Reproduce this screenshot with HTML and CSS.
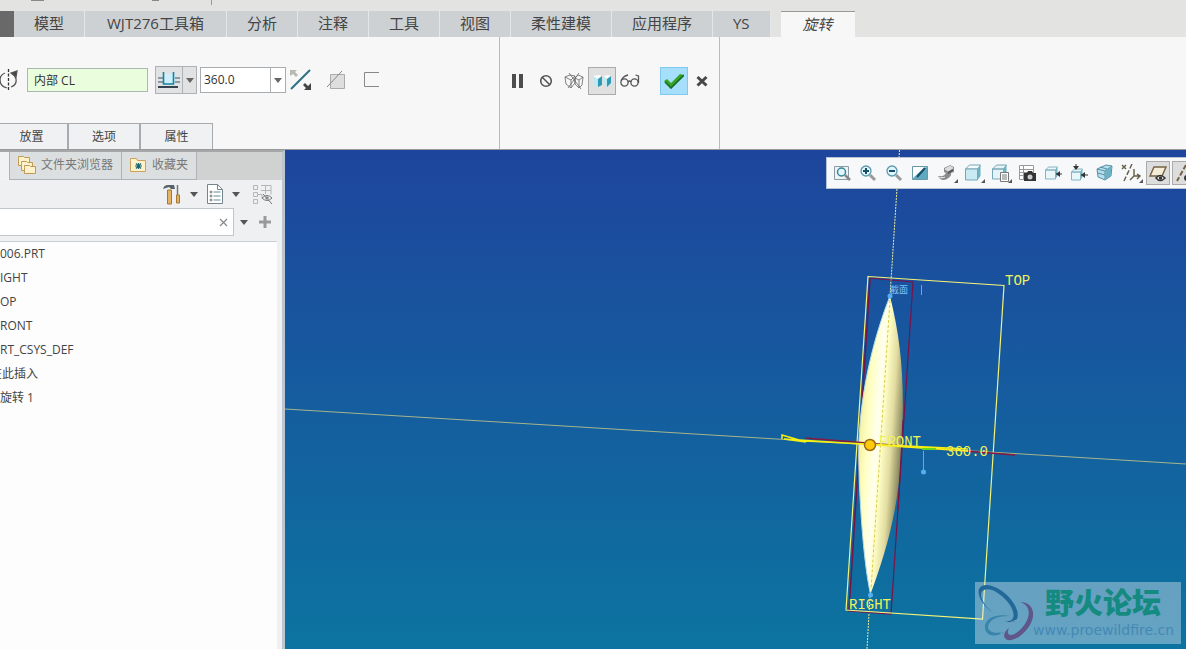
FILE: index.html
```html
<!DOCTYPE html>
<html lang="zh-CN">
<head>
<meta charset="utf-8">
<title>旋转</title>
<link rel="stylesheet" href="styles.css">
</head>
<body>
<div class="app">
  <div class="titlebar">
    <svg width="220" height="11"><path d="M31 0h13M152 0h7" stroke="#888" stroke-width="2"/><path d="M211.500 0v5" stroke="#999"/></svg>
  </div>
  <nav class="tabs">
    <span class="file-tab"></span>
    <button class="tab">模型</button>
    <button class="tab wide">WJT276工具箱</button>
    <button class="tab">分析</button>
    <button class="tab">注释</button>
    <button class="tab">工具</button>
    <button class="tab">视图</button>
    <button class="tab">柔性建模</button>
    <button class="tab">应用程序</button>
    <button class="tab">YS</button>
    <button class="tab current">旋转</button>
  </nav>
  <header class="ribbon">
    <section class="options">
      <div class="controls">
        <svg class="revolve" width="19" height="22" fill="none" stroke="#555" stroke-width="1.300"><path d="M8.500 0v22" stroke="#333" stroke-dasharray="3 1.500"/><path d="M5 4Q0 6 0 11q0 6 7 8M11 18q6-2 5-8l-2-5"/><path d="M11 4l6-2-1 6z" fill="#444"/></svg>
        <input class="axis" type="text" value="内部 CL" aria-label="旋转轴">
        <div class="split">
          <button class="split-main" aria-label="从草绘平面旋转"><svg width="22" height="18"><path d="M0 7h7M15 7h7M0 11h22" stroke="#8e9aa5" stroke-width="2"/><path d="M5 3h12v9H5z" fill="#cdeefa"/><path d="M5.500 1v12h10V1" fill="none" stroke="#16829f" stroke-width="1.600"/><path d="M0 16h20" stroke="#34434f" stroke-width="2"/></svg></button>
          <button class="drop" aria-label="深度选项"><svg width="8" height="5"><path d="M0 0h8L4 5z" fill="#666"/></svg></button>
        </div>
        <div class="combo">
          <input type="text" value="360.0" aria-label="角度">
          <button class="drop" aria-label="角度列表"><svg width="8" height="5"><path d="M0 0h8L4 5z" fill="#666"/></svg></button>
        </div>
        <button class="icon flip" aria-label="反向"><svg width="22" height="22"><path d="M1 20L20 1" stroke="#2a7180" stroke-width="2"/><path d="M0 1h7L5 3l3 3-2 2-3-3-3 2z" fill="#b9b9b2"/><path d="M21 21h-7l2-2-3-3 2-2 3 3 3-3z" fill="#444"/></svg></button>
        <button class="icon" aria-label="移除材料"><svg width="20" height="20"><path d="M4.500 4.500h14v14h-14z" fill="#dedede" stroke="#aaa"/><path d="M1 17L16 1" stroke="#888"/></svg></button>
        <button class="icon thicken" aria-label="加厚草绘"><svg width="16" height="16"><path d="M15 .5H.5v14H15" fill="none" stroke="#888"/></svg></button>
      </div>
      <div class="panels">
        <button>放置</button><button>选项</button><button>属性</button>
      </div>
    </section>
    <section class="actions">
      <button aria-label="暂停"><svg width="12" height="14"><path d="M0 0h4v14H0zM7 0h4v14H7z" fill="#4d4d4d"/></svg></button>
      <button aria-label="无预览"><svg width="14" height="14" fill="none" stroke="#555" stroke-width="1.600"><circle cx="7" cy="7" r="5.300"/><path d="M3 3l8 8"/></svg></button>
      <button aria-label="分离预览"><svg width="20" height="18" fill="none" stroke="#666" stroke-width=".8"><path d="M1 5l6 3v8l-5-4zM7 8l4-4v7l-4 5M1 5l5-2 5 1M11 6l4 2v8l-4-4zM15 8l4-3-1 8-3 3M11 6l3-3 5 2M4 16L15 1M5 1l12 16"/></svg></button>
      <button class="pressed" aria-label="连接预览"><svg width="20" height="18"><path d="M1 4l7-1 2 2-4 2z" fill="#fff"/><path d="M1 4l5 3v8l-4-3z" fill="#bdebf5"/><path d="M6 7l4-3v9l-4 2z" fill="#2e9ab5"/><path d="M11 4l6-1 2 2-4 2z" fill="#fff"/><path d="M11 4l4 3v8l-4-4z" fill="#bdebf5"/><path d="M15 7l4-3v7l-4 4z" fill="#2e9ab5"/></svg></button>
      <button aria-label="验证"><svg width="20" height="16" fill="none" stroke="#555" stroke-width="1.300"><circle cx="4.500" cy="9.500" r="3.600"/><circle cx="14.500" cy="9.500" r="3.600"/><path d="M8 9q1.500-2 3 0M1 8q2-5 7-6M18.500 10V3l-3-1"/></svg></button>
      <button class="ok" aria-label="确定"><svg width="20" height="16"><path d="M0 8l3-2 4 4L16 1l4 1L7 15z" fill="#35a526"/><path d="M1 9l6 6L20 2" fill="none" stroke="#176b25" stroke-width="1.600"/></svg></button>
      <button aria-label="取消"><svg width="12" height="12"><path d="M1.500 2l9 8.500M10.500 2l-9 8.500" stroke="#484848" stroke-width="3"/></svg></button>
    </section>
  </header>
  <main class="work">
    <aside class="side">
      <div class="side-tabs">
        <span class="side-current"></span>
        <button><svg width="20" height="20" fill="#fff1c9" stroke="#c09a55"><path d="M1.500 3.500v-2h5l1 1h5v8h-11z"/><path d="M4.500 8.500v-2h5l1 1h5v8h-11z"/><path d="M7.500 12.500v-2h5l1 1h5v7h-11z"/></svg>文件夹浏览器</button>
        <button><svg width="18" height="16"><path d="M1.500 3.500v-2h6l1 2h8v11h-15z" fill="#fff1c9" stroke="#c9a35e"/><path d="M6 9h7M9.500 6v6M7 6.500l5 5M12 6.500l-5 5" stroke="#1d6a75" stroke-width="1.200"/></svg>收藏夹</button>
      </div>
      <div class="tools">
        <button aria-label="设置"><svg width="18" height="21"><path d="M0 5Q1 1 5 1h6l1 4H8L6 3z" fill="#586069"/><path d="M4.500 6h4v14h-4z" fill="#e3b368" stroke="#a77734"/><path d="M14.500 1v10" stroke="#777" stroke-width="1.500"/><path d="M13.500 11h3v8h-3z" fill="#e3b368" stroke="#a77734"/></svg></button>
        <button aria-label="设置列表"><svg width="8" height="5"><path d="M0 0h8L4 5z" fill="#555"/></svg></button>
        <button aria-label="显示"><svg width="16" height="20"><path d="M.5.5h10l5 5v14H.5z" fill="#fff" stroke="#74858e"/><path d="M10.500.5v5h5" fill="none" stroke="#74858e"/><path d="M6.500 8h7M6.500 12h7M6.500 16h7" stroke="#638b9a"/><circle cx="4" cy="8" r="1" fill="none" stroke="#555" stroke-width=".8"/><circle cx="4" cy="12" r="1" fill="none" stroke="#555" stroke-width=".8"/><circle cx="4" cy="16" r="1" fill="none" stroke="#555" stroke-width=".8"/></svg></button>
        <button aria-label="显示列表"><svg width="8" height="5"><path d="M0 0h8L4 5z" fill="#555"/></svg></button>
        <button aria-label="树列"><svg width="22" height="21" fill="none" stroke="#b6b6b6"><path d="M1.500 1.500h4v4h-4zM1.500 8.500h4v4h-4zM1.500 15.500h4v4h-4zM9 1.500h10v9M9 6.500h10M13.500 1v9M6 10.500h4v4"/><path d="M10 14q5-5 10 0-5 5-10 0M11 10l9 10" stroke="#777"/><circle cx="15" cy="14" r="1.500" fill="#777"/></svg></button>
      </div>
      <div class="search">
        <div class="search-box"><input type="text" aria-label="搜索"><button aria-label="清除"><svg width="9" height="9"><path d="M1 1l7 7M8 1L1 8" stroke="#888" stroke-width="1.200"/></svg></button></div>
        <button aria-label="搜索选项"><svg width="8" height="5"><path d="M0 0h8L4 5z" fill="#555"/></svg></button>
        <button class="add" aria-label="添加"><svg width="12" height="12"><path d="M6 0v12M0 6h12" stroke="#999" stroke-width="3"/></svg></button>
      </div>
      <ul class="tree">
        <li>006.PRT</li><li>IGHT</li><li>OP</li><li>RONT</li><li>RT_CSYS_DEF</li><li class="clipped">在此插入</li><li>旋转 1</li>
      </ul>
    </aside>
    <section class="view">
      <svg class="scene" width="100%" height="100%">
        <defs><linearGradient id="body" gradientUnits="userSpaceOnUse" x1="859" y1="445" x2="903" y2="448">
          <stop offset="0" stop-color="#f5f2a5"/><stop offset=".18" stop-color="#ffffc4"/><stop offset=".4" stop-color="#fffff0"/><stop offset=".5" stop-color="#ffffc8"/><stop offset=".72" stop-color="#e2dca0"/><stop offset="1" stop-color="#777651"/></linearGradient></defs>
        <g transform="translate(-285 -150)" fill="none">
          <path d="M285 409L1186 464" stroke="#a5b58c"/>
          <path d="M899.500 150L890 296M870 596L867 649" stroke="#e8ee9e" stroke-dasharray="2 1"/>
          <path d="M869 278L913 282L891 614L848 611" stroke="#77134b" stroke-width="1.200"/>
          <path d="M870 279L849 610" stroke="#77134b" stroke-width="1.500"/>
          <path d="M890 296C875 334 856 400 859 470C860 510 864 565 870.500 594C885 555 899 510 901.500 450C905 385 902 345 890 296z" fill="url(#body)"/>
          <path d="M890 296C875 334 856 400 859 470C860 510 864 565 870.500 594" stroke="#b3dbe6"/>
          <path d="M890 300L871 590" stroke="#d9cb45" stroke-dasharray="3 2"/>
          <path d="M903 420L898 510" stroke="#77134b"/>
          <path d="M868 276.500L1004 285.500L982.500 619L846 610z" stroke="#f3f27a" stroke-width="1.200"/>
          <path d="M805 438L1015 455" stroke="#8a173e" stroke-width="1.500"/>
          <path d="M782 439v-4l24 7-22-3L968 451M805 441L968 449" stroke="#f5ef12" stroke-width="1.500"/>
          <path d="M922 449h14" stroke="#68d521" stroke-width="2"/>
          <path d="M923.500 451v20M921.500 285v10" stroke="#54aff0"/>
          <g fill="#54aff0"><circle cx="923.500" cy="472" r="2.500"/><circle cx="890" cy="296" r="2.500"/><circle cx="870.500" cy="595" r="2.500"/></g>
          <circle cx="870" cy="445" r="5.500" fill="#ffcb0b" stroke="#9c6a16" stroke-width="1.500"/>
          <g class="tags"><text x="1005" y="285">TOP</text><text x="879" y="446">FRONT</text><text x="946" y="456">360.0</text><text x="849" y="609">RIGHT</text></g>
          <text class="section-tag" x="890" y="293">截面</text>
        </g>
      </svg>
      <div class="view-tools">
        <button aria-label="重新调整"><svg width="18" height="18"><path d="M1.500 2.500h14v13h-14z" fill="#edf4f6" stroke="#8e9ba2"/><circle cx="8.500" cy="8" r="4" fill="#e0f6fb" stroke="#39849a" stroke-width="1.500"/><path d="M12 11l5 5" stroke="#888" stroke-width="2.500"/></svg></button>
        <button aria-label="放大"><svg width="18" height="18"><circle cx="7" cy="7" r="5" fill="#dff5fb" stroke="#5b9aae" stroke-width="1.300"/><path d="M4 7h6M7 4v6" stroke="#174f69" stroke-width="2"/><path d="M11 11l5 5" stroke="#999" stroke-width="3"/></svg></button>
        <button aria-label="缩小"><svg width="18" height="18"><circle cx="7" cy="7" r="5" fill="#dff5fb" stroke="#5b9aae" stroke-width="1.300"/><path d="M4 7h6" stroke="#174f69" stroke-width="2"/><path d="M11 11l5 5" stroke="#999" stroke-width="3"/></svg></button>
        <button aria-label="重画"><svg width="18" height="18"><path d="M1.500 2.500h15v13h-15z" fill="#bde0eb" stroke="#6999a9"/><path d="M2 15Q4 8 16 3v12z" fill="#61a9be"/><path d="M2 3h12L2 14z" fill="#fff"/><path d="M6 13l8-9" stroke="#174f69" stroke-width="2"/></svg></button>
        <button class="menu" aria-label="渲染选项"><svg width="18" height="18"><path d="M1 12q3 6 9 3 5-3 4-6l3-1V3l-4-2-6 3v4l2 1q-2 4-5 3z" fill="#8b8b8b"/><path d="M8 5l5-3 3 2-5 3zM2 13q3 2 6 0" fill="#ddd" stroke="#ddd"/><path d="M11 8l5-3v2l-5 3z" fill="#555"/></svg></button>
        <button class="menu" aria-label="显示样式"><svg width="18" height="18"><path d="M1.500 5l4-4h11l-3 4z" fill="#f4fcfe" stroke="#76a6b6"/><path d="M1.500 5h12v11h-12z" fill="#c9eaf3" stroke="#76a6b6"/><path d="M13.500 5l3-4v11l-3 4z" fill="#6cb1c4"/></svg></button>
        <button class="menu" aria-label="已保存方向"><svg width="18" height="18"><path d="M1.500 5l4-4h10l-3 4zM1.500 5h11v10h-11z" fill="#e3f3f8" stroke="#76a6b6"/><path d="M12.500 5l3-4v8l-3 5z" fill="#6cb1c4"/><path d="M9.500 8.500h8v9h-8z" fill="#fff" stroke="#777"/><path d="M11 11h5M11 13h5M11 15h5" stroke="#777"/></svg></button>
        <button aria-label="视图管理器"><svg width="18" height="18"><path d="M1.500 1.500h14v14h-14zM5.500 1v14M1 5.500h14M1 8.500h14M1 11.500h14" fill="#fff" stroke="#999"/><path d="M6 9h3l1-2h4l1 2h3v8H6z" fill="#333"/><circle cx="12" cy="13" r="2.500" fill="#ccc"/></svg></button>
        <button aria-label="视图法向"><svg width="18" height="18"><path d="M1.500 6l3-3h9l-2 3zM1.500 6h10v9h-10z" fill="#e9f7fa" stroke="#85b4c3"/><path d="M11.500 6l2-3v9l-2 3z" fill="#73b5c8"/><path d="M12 10h6" stroke="#333"/><path d="M12 10l4-3v6z" fill="#333"/></svg></button>
        <button aria-label="视图方向"><svg width="18" height="18"><path d="M1.500 8l3-3h8l-2 3zM1.500 8h9v8h-9z" fill="#e9f7fa" stroke="#85b4c3"/><path d="M10.500 8l2-3v8l-2 3z" fill="#73b5c8"/><path d="M11 11h7M6 0v5" stroke="#333"/><path d="M11 11l4-3v6zM3 2h6L6 6z" fill="#333"/></svg></button>
        <button aria-label="透视图"><svg width="18" height="18"><path d="M1 5l9-4 6 1-1 10-6 4-7-3z" fill="#b7deea" stroke="#5792a6"/><path d="M1 5l8 2 7-5M9 7v9M4 3l7 2-1 9M2 9l7 2 6-4" fill="none" stroke="#5792a6"/><path d="M9 7l6-4v9l-6 4z" fill="#6cb1c4"/></svg></button>
        <button class="menu" aria-label="基准显示"><svg width="20" height="18" fill="none" stroke="#665d44" stroke-width="1.400"><path d="M1 1l4 4M5 1L1 5"/><path d="M11 0L3 17" stroke-dasharray="5 2"/><path d="M13 5v7l-4 4M13 12h6M16 10l3 2-3 3"/></svg></button>
        <button class="pressed" aria-label="平面显示"><svg width="18" height="18"><path d="M5 3h12l-4 9H1z" fill="#f4edd7" stroke="#756345" stroke-width="1.400"/><path d="M7 14q4-5 9 0-5 5-9 0z" fill="#eee" stroke="#333" stroke-width="1.500"/><circle cx="11.500" cy="14" r="1.700" fill="#333"/></svg></button>
        <button class="pressed" aria-label="轴显示"><svg width="18" height="18"><path d="M11 1L2 17" stroke="#756345" stroke-width="2" stroke-dasharray="5 2"/><circle cx="12" cy="14" r="3" fill="#333"/></svg></button>
      </div>
      <div class="watermark">
        <svg width="58" height="62" viewBox="0 0 58 62" fill="none"><path d="M18 31C3 20-2 4 11 3C26 3 47 24 42 37C40 41 35 41 30 39C44 41 40 23 24 12C12 3 3 8 7 17C9 22 13 27 18 31z" fill="#22699a"/><path d="M35 34C20 31 9 37 10 46C11 54 20 56 29 50C20 52 13 50 13 45C14 37 23 34 35 34z" fill="#3984aa"/><path d="M45 20C59 20 62 34 53 46C44 58 31 62 29 54C29 51 31 48 34 46C30 54 37 56 46 47C56 36 57 24 45 20z" fill="#5f5689"/><path d="M26 52C27 45 35 39 46 37" stroke="#7c9fc0"/></svg>
        <div><strong>野火论坛</strong><span>www.proewildfire.cn</span></div>
      </div>
    </section>
  </main>
</div>
</body>
</html>
```
FILE: styles.css
```css
* { box-sizing: border-box; }
body {
  margin: 0;
  font: 12px/16px "Open Sans", "Noto Sans CJK SC", sans-serif;
  color: #444;
  background: #f7f7f7;
}
button {
  display: flex;
  align-items: center;
  justify-content: center;
  flex: none;
  padding: 0;
  border: 0;
  background: none;
  color: inherit;
  font: inherit;
}
input { min-width: 0; font: inherit; color: #333; }
svg { display: block; flex: none; }

.app { display: flex; flex-direction: column; height: 100vh; overflow: hidden; }
.titlebar { height: 11px; flex: none; background: #e3e3e2; }

.tabs { display: flex; height: 26px; flex: none; background: #e3e3e2; font-size: 15px; line-height: 20px; }
.file-tab { width: 14px; background: #696969; }
.tab { padding: 0 20px 2px; background: #cdd1d4; border-right: 1px solid #e4e6e7; white-space: nowrap; }
.tab.wide { padding: 0 22px 2px; }
.tab.current {
  margin-left: 10px;
  padding: 0 22px 2px;
  background: #f7f7f7;
  border: 0;
  border-top: 1px solid #999;
  font-style: italic;
}

.ribbon { display: flex; height: 113px; flex: none; border-bottom: 1px solid #999; }
.options { display: flex; flex-direction: column; justify-content: space-between; width: 500px; padding-top: 29px; border-right: 1px solid #bbb; }
.controls { display: flex; align-items: center; height: 28px; }
.axis { width: 121px; height: 24px; margin: 0 7px 0 8px; padding: 0 6px; border: 1px solid #a9b9b1; background: #eafddd; }
.split { display: flex; width: 42px; height: 28px; border: 1px solid #aeb2b5; background: #e0e2e4; }
.split-main { flex: 1; }
.drop { width: 14px; border-left: 1px solid #aeb2b5; }
.combo { display: flex; width: 86px; height: 26px; margin-left: 3px; border: 1px solid #a9adb0; background: #fff; }
.combo input { flex: 1; padding: 0 3px; border: 0; background: none; }
.combo .drop { width: 15px; }
.flip { margin: 0 14px 0 4px; }
.thicken { margin-left: 18px; }
.panels { display: flex; }
.panels button { width: 72px; height: 26px; border: 1px solid #a8abad; border-width: 1px 2px 0 0; background: #eff1f2; }
.panels button:first-child { width: 69px; padding-right: 4px; }
.panels button:last-child { border-right-width: 1px; }
.actions { display: flex; align-items: flex-start; width: 220px; padding: 30px 0 0 4px; border-right: 1px solid #bbb; }
.actions button { width: 28px; height: 28px; }
.actions .pressed { border: 1px solid #aaa; background: #e0e0e0; }
.actions .ok { margin-left: 16px; border: 1px solid #80c8ed; background: #a5dffb; }

.work { display: flex; flex: 1; min-height: 0; }
.side { display: flex; flex-direction: column; width: 285px; flex: none; border-top: 2px solid #a5a7a8; border-right: 3px solid #bdc6ce; background: #eef0f1; }
.side-tabs { display: flex; height: 28px; background: #d0d1d1; color: #777; }
.side-current { width: 9px; background: #f0f2f3; }
.side-tabs button { gap: 4px; padding: 0 8px 2px 7px; border: 1px solid #b0b3b5; border-width: 0 0 1px 1px; background: #dcdfe0; }
.side-tabs button:last-child { gap: 5px; border-right-width: 1px; }
.tools { display: flex; align-items: center; justify-content: flex-end; gap: 9px; height: 28px; padding-right: 8px; }
.tools button:last-child { margin-left: 3px; }
.search { display: flex; align-items: center; gap: 6px; height: 28px; }
.search-box { display: flex; width: 234px; height: 28px; border: 1px solid #bfc5c9; border-left: 0; background: #fff; }
.search-box input { flex: 1; border: 0; background: none; }
.search-box button { width: 19px; }
.add { margin-left: 5px; }
.tree { flex: 1; margin: 5px 5px 0 0; padding: 0; border-top: 1px solid #c8ced2; background: #fdfdfd; list-style: none; overflow: hidden; }
.tree li { height: 24px; line-height: 24px; white-space: nowrap; }
.tree .clipped { margin-left: -10px; }

.view { position: relative; flex: 1; min-width: 0; overflow: hidden; background: linear-gradient(#1e459d, #0c74a0); }
.scene { position: absolute; inset: 0; }
.tags { fill: #eef25c; font: 14px "Liberation Mono", monospace; }
.section-tag { fill: #7cc6fa; font: 9px "Noto Sans CJK SC", sans-serif; }
.view-tools { position: absolute; top: 7px; right: 0; display: flex; width: 360px; height: 32px; padding: 3px 0 3px 3px; border: 1px solid #b8c2d2; border-right: 0; background: #f7f8fa; overflow: hidden; }
.view-tools button { position: relative; width: 24px; height: 24px; margin-right: 2px; }
.view-tools .menu { margin-right: 3px; }
.view-tools .pressed { border: 1px solid #aaa; background: #ddd; }
.menu::after { content: ""; position: absolute; right: 0; bottom: 2px; border: 2px solid #555; border-top-color: transparent; border-left-color: transparent; }
.watermark { position: absolute; right: 5px; bottom: 5px; display: flex; width: 206px; height: 62px; background: rgba(234, 237, 246, .4); }
.watermark strong { display: block; padding: 1px 0 0 12px; color: #148a80; font: 900 29px/36px "Noto Sans CJK SC", sans-serif; }
.watermark span { color: #4489b5; font: 14px/22px "DejaVu Sans", sans-serif; }
```
